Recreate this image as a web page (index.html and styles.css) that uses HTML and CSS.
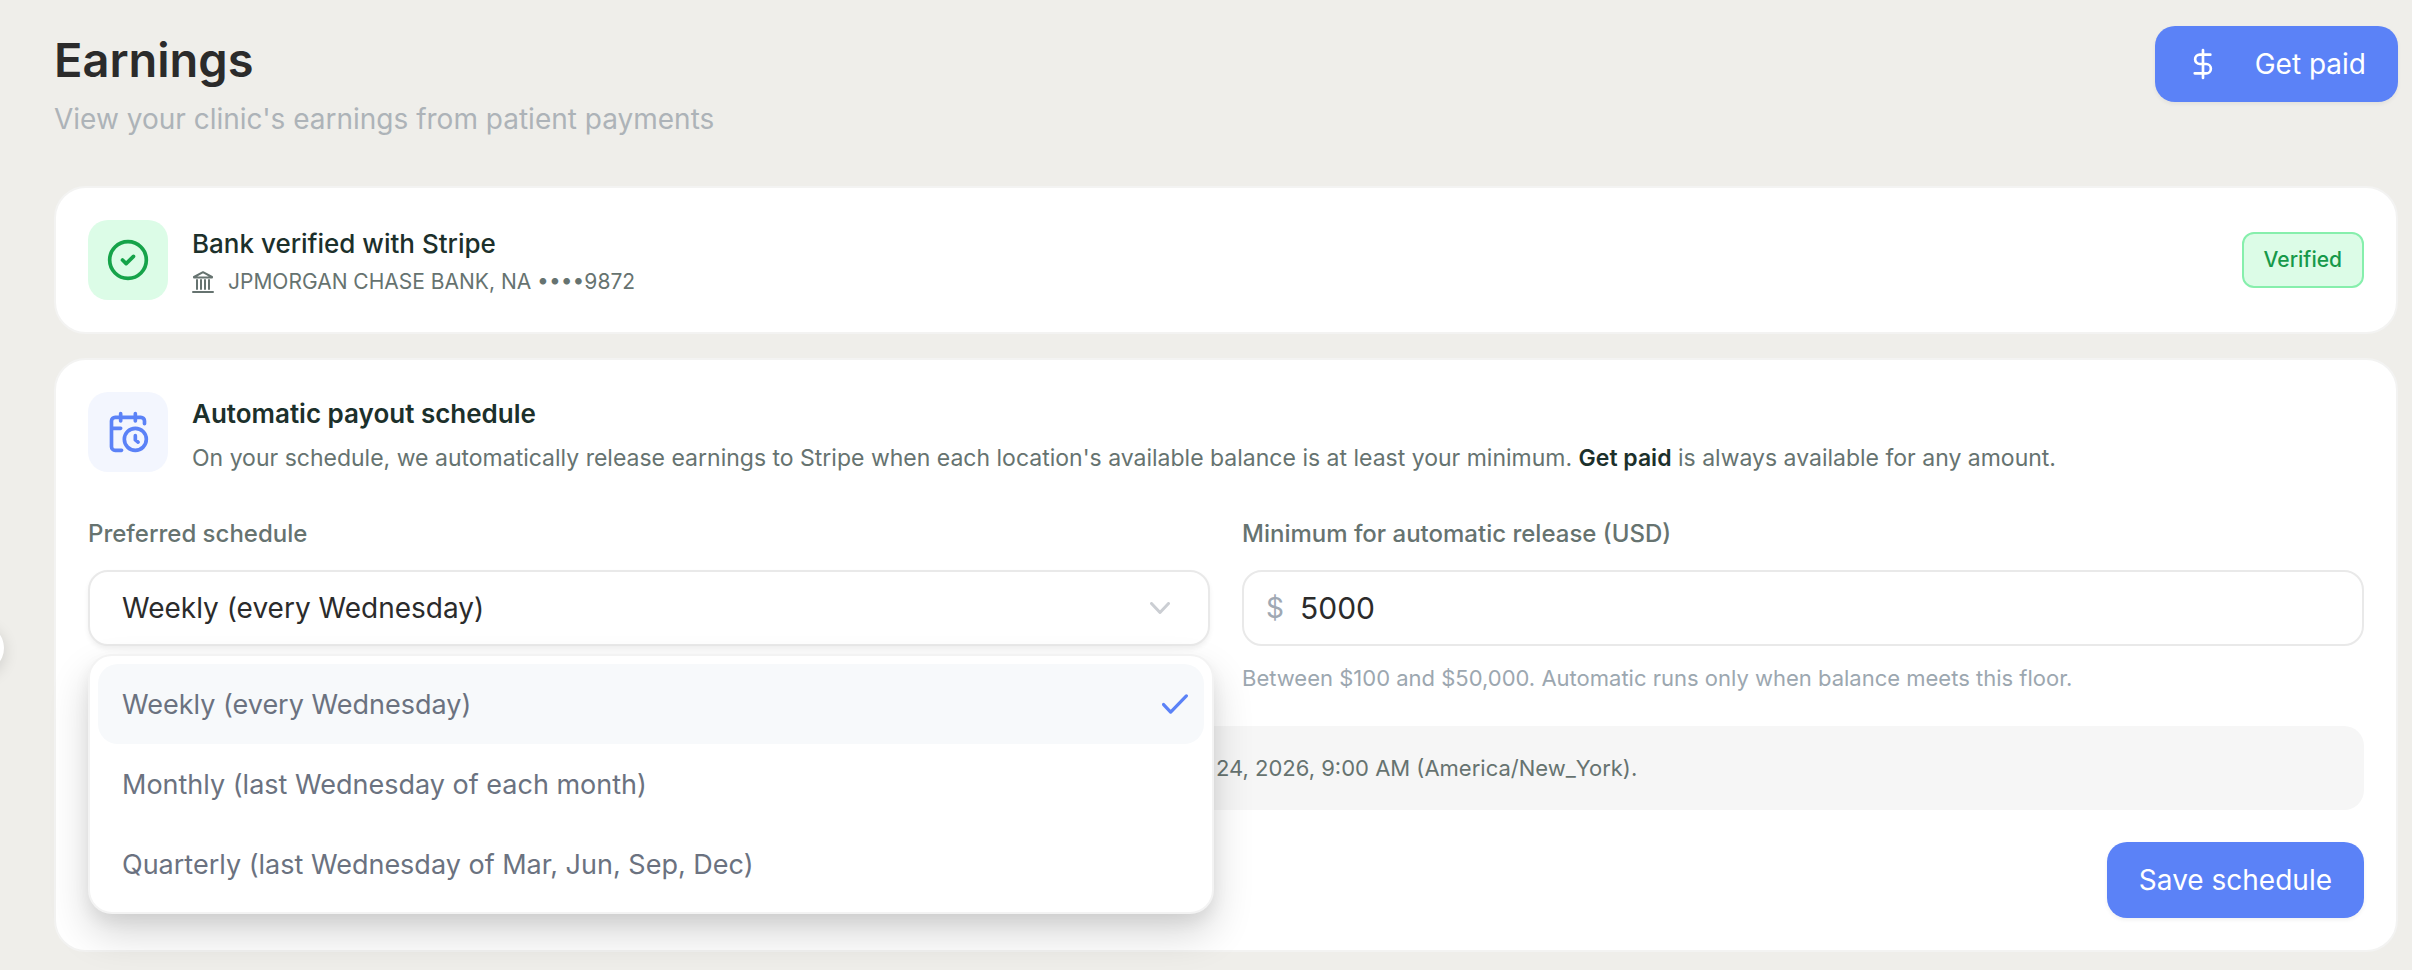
FILE: index.html
```html
<!DOCTYPE html>
<html lang="en">
<head>
<meta charset="utf-8">
<meta name="viewport" content="width=device-width, initial-scale=1">
<title>Earnings</title>
<link rel="stylesheet" href="styles.css">
</head>
<body>
<button class="sidebar-toggle" type="button" aria-label="Toggle sidebar"></button>
<main class="page">
  <header class="page-header">
    <div>
      <h1 class="page-title">Earnings</h1>
      <p class="page-subtitle">View your clinic's earnings from patient payments</p>
    </div>
    <button class="button button-icon" type="button">
      <svg class="icon-dollar" viewBox="0 0 24 24" aria-hidden="true"><path d="M12 1.5v21M17.5 5H9.6a3.5 3.5 0 0 0 0 7h4.8a3.5 3.5 0 0 1 0 7H5.8"/></svg>
      <span>Get paid</span>
    </button>
  </header>

  <section class="card bank">
    <div class="tile tile-green">
      <svg viewBox="0 0 24 24" aria-hidden="true"><circle cx="12" cy="12" r="10"/><path d="m9 12 2 2 4-4"/></svg>
    </div>
    <div class="bank-text">
      <h2 class="card-title medium">Bank verified with Stripe</h2>
      <p class="bank-account">
        <svg class="icon-bank" viewBox="0 0 20 22" aria-hidden="true"><path d="M1 6 10 1.2 19 6v.6H1zM4 9v9M8 9v9M12 9v9M16 9v9M0 21h20"/></svg>
        <span>JPMORGAN CHASE BANK, NA ••••9872</span>
      </p>
    </div>
    <span class="badge">Verified</span>
  </section>

  <section class="card schedule">
    <div class="schedule-head">
      <div class="tile tile-blue">
        <svg viewBox="0 0 24 24" aria-hidden="true"><path d="M21 7.5V6a2 2 0 0 0-2-2H5a2 2 0 0 0-2 2v14a2 2 0 0 0 2 2h3.5M16 2v4M8 2v4M3 10h5M17.5 17.5 16 16.3V14"/><circle cx="16" cy="16" r="6"/></svg>
      </div>
      <div class="schedule-text">
        <h2 class="card-title">Automatic payout schedule</h2>
        <p class="card-copy">On your schedule, we automatically release earnings to Stripe when each location's available balance is at least your minimum. <strong>Get paid</strong> is always available for any amount.</p>
      </div>
    </div>

    <form class="schedule-form">
      <div class="fields">
        <div class="field">
          <label class="label" for="schedule">Preferred schedule</label>
          <div class="select-wrap">
            <select class="control control-select" id="schedule">
              <option>Weekly (every Wednesday)</option>
              <option>Monthly (last Wednesday of each month)</option>
              <option>Quarterly (last Wednesday of Mar, Jun, Sep, Dec)</option>
            </select>
            <svg class="icon-chevron" viewBox="0 0 20 12" aria-hidden="true"><path d="m1.5 1.5 8.5 9 8.5-9"/></svg>
            <ul class="menu" role="listbox" aria-label="Preferred schedule">
              <li class="menu-item selected" role="option" aria-selected="true">
                <span>Weekly (every Wednesday)</span>
                <svg class="icon-check" viewBox="0 0 24 20" aria-hidden="true"><path d="m1.5 10.5 6.5 7 14.5-15"/></svg>
              </li>
              <li class="menu-item" role="option" aria-selected="false">Monthly (last Wednesday of each month)</li>
              <li class="menu-item" role="option" aria-selected="false">Quarterly (last Wednesday of Mar, Jun, Sep, Dec)</li>
            </ul>
          </div>
        </div>
        <div class="field">
          <label class="label" for="minimum">Minimum for automatic release (USD)</label>
          <div class="control money">
            <span class="money-sign" aria-hidden="true">$</span>
            <input class="money-input" id="minimum" type="text" inputmode="numeric" value="5000">
          </div>
          <p class="hint">Between $100 and $50,000. Automatic runs only when balance meets this floor.</p>
        </div>
      </div>
      <p class="next-run">24, 2026, 9:00 AM (America/New_York).</p>
      <div class="actions">
        <button class="button" type="submit">Save schedule</button>
      </div>
    </form>
  </section>
</main>
</body>
</html>
```
FILE: styles.css
```css
* {
  box-sizing: border-box;
}

body {
  margin: 0;
  background: #efeeea;
  color: #2b2b2b;
  font-family: "Inter", "Lato", sans-serif;
  font-size: 27px;
}

h1, h2, p, ul {
  margin: 0;
  padding: 0;
}

button, input, select {
  font: inherit;
  color: inherit;
}

svg {
  display: block;
  flex: none;
  fill: none;
  stroke: currentColor;
  stroke-width: 2;
  stroke-linecap: round;
  stroke-linejoin: round;
}

.page {
  display: flex;
  flex-direction: column;
  gap: 24px;
  padding: 26px 14px 18px 54px;
}

.page-header {
  display: flex;
  justify-content: space-between;
  align-items: flex-start;
  min-height: 136px;
}

.page-title {
  font-size: 47px;
  line-height: 68px;
  font-weight: 600;
}

.page-subtitle {
  font-size: 28px;
  line-height: 50px;
  color: #adb3b8;
}

.button {
  display: flex;
  align-items: center;
  height: 76px;
  padding: 0 32px;
  border: 0;
  border-radius: 20px;
  background: #5b82f7;
  box-shadow: 0 2px 4px rgb(0 0 0 / 6%);
  color: #fff;
  font-size: 28px;
}

.button-icon {
  gap: 36px;
}

.icon-dollar {
  width: 32px;
  height: 32px;
}

.card {
  border: 2px solid #f3f3f2;
  border-radius: 32px;
  padding: 32px;
  background: #fff;
}

.bank {
  display: flex;
  align-items: center;
  gap: 24px;
}

.tile {
  display: grid;
  place-items: center;
  flex: none;
  width: 80px;
  height: 80px;
  border-radius: 20px;
}

.tile svg {
  width: 44px;
  height: 44px;
}

.tile-green {
  background: #dcfce7;
  color: #16a34a;
}

.tile-blue {
  background: #f3f6fe;
  color: #5b82f7;
}

.bank-text {
  flex: 1;
  padding-top: 4px;
}

.card-title {
  font-size: 26px;
  line-height: 40px;
  font-weight: 600;
  color: #1c302b;
}

.medium {
  font-weight: 500;
}

.bank-account {
  display: flex;
  align-items: center;
  gap: 14px;
  font-size: 21px;
  line-height: 36px;
  color: #667370;
}

.icon-bank {
  width: 22px;
  height: 22px;
}

.badge {
  padding: 0 20px;
  border: 2px solid #86efac;
  border-radius: 12px;
  background: #dcfce7;
  color: #16994a;
  font-size: 21px;
  line-height: 52px;
  font-weight: 500;
}

.schedule-head {
  display: flex;
  gap: 24px;
}

.schedule-text {
  padding-top: 2px;
}

.card-copy {
  font-size: 23px;
  line-height: 48px;
  color: #667370;
}

.card-copy strong {
  font-weight: 600;
  color: #1c302b;
}

.schedule-form {
  display: flex;
  flex-direction: column;
  gap: 32px;
  margin-top: 32px;
}

.fields {
  display: grid;
  grid-template-columns: 1fr 1fr;
  gap: 32px;
}

.field {
  display: flex;
  flex-direction: column;
}

.label {
  margin-bottom: 16px;
  font-size: 24px;
  line-height: 40px;
  font-weight: 500;
  color: #667370;
}

.select-wrap {
  position: relative;
}

.control {
  width: 100%;
  height: 76px;
  border: 2px solid #e9e9e9;
  border-radius: 20px;
  background: #fff;
  font-size: 28px;
}

.control-select {
  display: block;
  appearance: none;
  padding: 0 32px;
  box-shadow: 0 3px 5px rgb(0 0 0 / 6%);
}

.icon-chevron {
  position: absolute;
  top: 32px;
  right: 40px;
  width: 20px;
  height: 12px;
  color: #cbced3;
  stroke-width: 3;
}

.menu {
  position: absolute;
  top: 84px;
  left: 0;
  right: -4px;
  padding: 8px;
  border: 2px solid #f3f3f3;
  border-radius: 24px;
  background: #fff;
  box-shadow: 0 20px 40px rgb(0 0 0 / 16%), 0 8px 16px rgb(0 0 0 / 6%);
  list-style: none;
}

.menu-item {
  display: flex;
  align-items: center;
  justify-content: space-between;
  height: 80px;
  padding: 0 16px 0 24px;
  border-radius: 20px;
  color: #6b7280;
}

.selected {
  background: #f7f9fb;
}

.icon-check {
  width: 26px;
  height: 22px;
  color: #5b82f7;
  stroke-width: 3;
}

.money {
  display: flex;
  align-items: center;
  gap: 16px;
  padding: 0 22px;
}

.money-sign {
  color: #a0a8b3;
}

.money-input {
  flex: 1;
  min-width: 0;
  padding: 0;
  border: 0;
  outline: 0;
  background: none;
  font-size: 30px;
}

.hint {
  margin-top: 16px;
  font-size: 22px;
  line-height: 32px;
  color: #9ca7b0;
}

.next-run {
  padding: 0 24px 0 calc(50% - 10px);
  border-radius: 20px;
  background: #f6f6f6;
  color: #667370;
  font-size: 22px;
  line-height: 84px;
}

.actions {
  display: flex;
  justify-content: flex-end;
}

.sidebar-toggle {
  position: absolute;
  top: 624px;
  left: -44px;
  width: 48px;
  height: 48px;
  border: 0;
  border-radius: 50%;
  background: #fff;
  box-shadow: 0 4px 16px rgb(0 0 0 / 14%);
}
```
